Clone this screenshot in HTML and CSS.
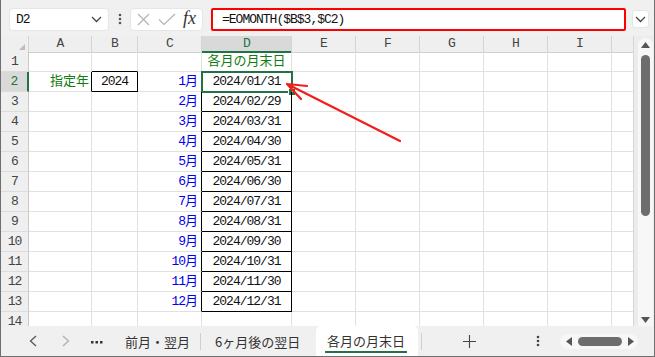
FILE: index.html
```html
<!DOCTYPE html>
<html lang="ja">
<head>
    <meta charset="UTF-8">
    <title>各月の月末日</title>
    <link rel="stylesheet" href="styles.css">
</head>
<body>
<div class="app">
    <div class="formula-bar">
        <div class="name-box">
            <span>D2</span>
            <svg width="11" height="7" viewBox="0 0 11 7"><polyline points="1,1 5.5,5.5 10,1" fill="none" stroke="#444" stroke-width="1.3"/></svg>
        </div>
        <div class="kebab">
            <svg width="4" height="12" viewBox="0 0 4 12"><circle cx="2" cy="2" r="1.3" fill="#555"/><circle cx="2" cy="6" r="1.3" fill="#555"/><circle cx="2" cy="10" r="1.3" fill="#555"/></svg>
        </div>
        <div class="fx-box">
            <svg class="ic-x" width="13" height="13" viewBox="0 0 13 13"><path d="M1 1 L12 12 M12 1 L1 12" stroke="#b4b4b4" stroke-width="1.2"/></svg>
            <svg class="ic-ok" width="18" height="13" viewBox="0 0 18 13"><polyline points="1,6.5 6,11.5 17,1" fill="none" stroke="#b4b4b4" stroke-width="1.2"/></svg>
            <span class="fx">fx</span>
        </div>
        <div class="formula">=EOMONTH($B$3,$C2)</div>
        <div class="expand">
            <svg width="11" height="7" viewBox="0 0 11 7"><polyline points="1,1 5.5,5.5 10,1" fill="none" stroke="#444" stroke-width="1.3"/></svg>
        </div>
    </div>

    <div class="sheet-area">
        <div class="grid">
            <div class="row hrow">
                <div class="corner"></div><div>A</div><div>B</div><div>C</div><div class="on">D</div><div>E</div><div>F</div><div>G</div><div>H</div><div>I</div><div></div>
            </div>
            <div class="row">
                <div class="rh">1</div><div></div><div class="bb"></div><div></div><div class="bb g ctr">各月の月末日</div><div></div><div></div><div></div><div></div><div></div><div></div>
            </div>
            <div class="row">
                <div class="rh on">2</div><div class="br g r">指定年</div><div class="box ctr">2024</div><div class="br m">1月</div>
                <div class="box ctr active">2024/01/31<span class="sel"><i class="handle"></i></span></div>
                <div></div><div></div><div></div><div></div><div></div><div></div>
            </div>
            <div class="row">
                <div class="rh">3</div><div></div><div></div><div class="br m">2月</div><div class="box ctr">2024/02/29</div><div></div><div></div><div></div><div></div><div></div><div></div>
            </div>
            <div class="row">
                <div class="rh">4</div><div></div><div></div><div class="br m">3月</div><div class="box ctr">2024/03/31</div><div></div><div></div><div></div><div></div><div></div><div></div>
            </div>
            <div class="row">
                <div class="rh">5</div><div></div><div></div><div class="br m">4月</div><div class="box ctr">2024/04/30</div><div></div><div></div><div></div><div></div><div></div><div></div>
            </div>
            <div class="row">
                <div class="rh">6</div><div></div><div></div><div class="br m">5月</div><div class="box ctr">2024/05/31</div><div></div><div></div><div></div><div></div><div></div><div></div>
            </div>
            <div class="row">
                <div class="rh">7</div><div></div><div></div><div class="br m">6月</div><div class="box ctr">2024/06/30</div><div></div><div></div><div></div><div></div><div></div><div></div>
            </div>
            <div class="row">
                <div class="rh">8</div><div></div><div></div><div class="br m">7月</div><div class="box ctr">2024/07/31</div><div></div><div></div><div></div><div></div><div></div><div></div>
            </div>
            <div class="row">
                <div class="rh">9</div><div></div><div></div><div class="br m">8月</div><div class="box ctr">2024/08/31</div><div></div><div></div><div></div><div></div><div></div><div></div>
            </div>
            <div class="row">
                <div class="rh">10</div><div></div><div></div><div class="br m">9月</div><div class="box ctr">2024/09/30</div><div></div><div></div><div></div><div></div><div></div><div></div>
            </div>
            <div class="row">
                <div class="rh">11</div><div></div><div></div><div class="br m">10月</div><div class="box ctr">2024/10/31</div><div></div><div></div><div></div><div></div><div></div><div></div>
            </div>
            <div class="row">
                <div class="rh">12</div><div></div><div></div><div class="br m">11月</div><div class="box ctr">2024/11/30</div><div></div><div></div><div></div><div></div><div></div><div></div>
            </div>
            <div class="row">
                <div class="rh">13</div><div></div><div></div><div class="br m">12月</div><div class="box ctr">2024/12/31</div><div></div><div></div><div></div><div></div><div></div><div></div>
            </div>
            <div class="row">
                <div class="rh">14</div><div></div><div></div><div></div><div></div><div></div><div></div><div></div><div></div><div></div><div></div>
            </div>
        </div>
        <div class="vscroll">
            <div class="vtrack">
                <svg width="9" height="6" viewBox="0 0 9 6"><polygon points="0,6 4.5,0 9,6" fill="#555"/></svg>
                <div class="vthumb"></div>
                <svg class="down" width="9" height="6" viewBox="0 0 9 6"><polygon points="0,0 4.5,6 9,0" fill="#555"/></svg>
            </div>
        </div>
    </div>

    <div class="tab-bar">
        <div class="nav">
            <svg width="8" height="12" viewBox="0 0 8 12"><polyline points="7,1 1.5,6 7,11" fill="none" stroke="#555" stroke-width="1.3"/></svg>
        </div>
        <div class="nav">
            <svg width="8" height="12" viewBox="0 0 8 12"><polyline points="1,1 6.5,6 1,11" fill="none" stroke="#b0b0b0" stroke-width="1.3"/></svg>
        </div>
        <div class="nav more">
            <svg width="12" height="3" viewBox="0 0 12 3"><rect x="0" y="0" width="2.5" height="2.5" fill="#333"/><rect x="4.5" y="0" width="2.5" height="2.5" fill="#333"/><rect x="9" y="0" width="2.5" height="2.5" fill="#333"/></svg>
        </div>
        <div class="tab t1">前月・翌月</div>
        <div class="tab t2">6ヶ月後の翌日</div>
        <div class="tab current"><span>各月の月末日</span></div>
        <div class="add">
            <svg width="13" height="13" viewBox="0 0 13 13"><path d="M6.5 0 V13 M0 6.5 H13" stroke="#444" stroke-width="1.1"/></svg>
        </div>
        <div class="tab-menu">
            <svg width="4" height="12" viewBox="0 0 4 12"><circle cx="2" cy="2" r="1.3" fill="#444"/><circle cx="2" cy="6" r="1.3" fill="#444"/><circle cx="2" cy="10" r="1.3" fill="#444"/></svg>
        </div>
        <div class="hscroll">
            <svg width="6" height="9" viewBox="0 0 6 9"><polygon points="6,0 0,4.5 6,9" fill="#555"/></svg>
            <div class="hthumb"></div>
            <svg width="6" height="9" viewBox="0 0 6 9"><polygon points="0,0 6,4.5 0,9" fill="#555"/></svg>
        </div>
    </div>

    <svg class="callout" width="655" height="357" viewBox="0 0 655 357">
        <path d="M400 141 L287 84 M287 84 L307 86 M287 84 L301 99" fill="none" stroke="#f21d1d" stroke-width="2.2" stroke-linecap="round"/>
    </svg>
</div>
</body>
</html>
```

FILE: styles.css
```css
:root {
    --grid-line: #e1e1e1;
    --head-bg: #efefef;
    --head-line: #d4d4d4;
    --excel-green: #217346;
    --text-green: #107c10;
    --month-blue: #0000f0;
}
* {
    box-sizing: border-box;
}
body {
    margin: 0;
    font-family: "Liberation Mono", "Noto Sans CJK JP", monospace;
    font-size: 13px;
    color: #111;
}
.app {
    position: relative;
    width: 655px;
    height: 357px;
    border: 1px solid #6f6f6f;
    border-top: 0;
    background: #f0f0f0;
    display: flex;
    flex-direction: column;
    overflow: hidden;
}

/* formula bar */
.formula-bar {
    height: 36px;
    flex: none;
    display: flex;
    align-items: center;
    padding: 2px 0 0 8px;
}
.name-box {
    width: 100px;
    height: 23px;
    background: #fff;
    border: 1px solid #e6e6e6;
    border-radius: 4px;
    display: flex;
    align-items: center;
    justify-content: space-between;
    padding: 0 6px 0 6px;
    letter-spacing: -1px;
}
.kebab {
    width: 21px;
    display: flex;
    justify-content: center;
}
.fx-box {
    width: 73px;
    height: 23px;
    background: #fff;
    border: 1px solid #e6e6e6;
    border-radius: 4px;
    display: flex;
    align-items: center;
    padding-left: 6px;
}
.ic-ok {
    margin-left: 8px;
}
.fx {
    margin-left: 7px;
    font-family: "Liberation Serif", serif;
    font-style: italic;
    font-size: 18px;
    color: #333;
    line-height: 1;
    margin-top: -2px;
}
.formula {
    margin-left: 8px;
    width: 415px;
    height: 23px;
    background: #fff;
    border: 2px solid #ff0000;
    border-radius: 2px;
    padding-left: 9px;
    line-height: 19px;
    letter-spacing: -1px;
}
.expand {
    margin-left: 6px;
    width: 17px;
    height: 18px;
    background: #fff;
    border: 1px solid #e6e6e6;
    border-radius: 3px;
    display: flex;
    align-items: center;
    justify-content: center;
}

/* sheet */
.sheet-area {
    height: 290px;
    flex: none;
    display: flex;
}
.grid {
    width: 632px;
    background: #fff;
    overflow: hidden;
}
.row {
    display: grid;
    grid-template-columns: 28px 63px 46px 64px 90px 64px 64px 64px 64px 64px 21px;
    height: 20px;
}
.row > div {
    position: relative;
    border-right: 1px solid var(--grid-line);
    border-bottom: 1px solid var(--grid-line);
    line-height: 19px;
    letter-spacing: -1px;
    white-space: nowrap;
}
.row > div:last-child {
    border-right: 0;
}
.hrow {
    height: 16px;
}
.hrow > div {
    background: var(--head-bg);
    border-right-color: var(--head-line);
    border-bottom-color: #cfcfcf;
    line-height: 15px;
    text-align: center;
    color: #444;
}
.hrow > div.on {
    background: #d9d9d9;
    color: var(--excel-green);
    border-bottom: 2px solid var(--excel-green);
}
.corner::after {
    content: '';
    position: absolute;
    right: 3px;
    bottom: 2px;
    border-left: 6px solid transparent;
    border-bottom: 6px solid #bdbdbd;
}
.row > .rh {
    background: var(--head-bg);
    border-right-color: #c8c8c8;
    border-bottom-color: #dcdcdc;
    text-align: center;
    color: #444;
}
.row > .rh.on {
    background: #d9d9d9;
    color: var(--excel-green);
    border-right: 2px solid var(--excel-green);
}
.row > .br {
    border-right-color: #000;
}
.row > .bb {
    border-bottom-color: #000;
}
.row > .box {
    border-right-color: #000;
    border-bottom-color: #000;
}
.ctr {
    text-align: center;
}
.r {
    text-align: right;
    padding-right: 2px;
}
.row > .g {
    color: var(--text-green);
    letter-spacing: 0;
}
.row > .m {
    text-align: right;
    padding-right: 4px;
    color: var(--month-blue);
}
.sel {
    position: absolute;
    left: -1px;
    top: -1px;
    right: -2px;
    bottom: -2px;
    border: 2px solid var(--excel-green);
}
.handle {
    position: absolute;
    right: -4px;
    bottom: -4px;
    width: 6px;
    height: 6px;
    background: var(--excel-green);
    border: 1px solid #fff;
    box-sizing: content-box;
    margin: -1px;
}

/* vertical scrollbar */
.vscroll {
    width: 21px;
    border-left: 1px solid #d6d6d6;
    background: #ececec;
    padding: 2px 1px 0 4px;
}
.vtrack {
    height: 100%;
    background: #f7f7f7;
    border-radius: 7px 7px 0 0;
    display: flex;
    flex-direction: column;
    align-items: center;
    padding-top: 4px;
}
.vthumb {
    width: 9px;
    height: 161px;
    margin-top: 7px;
    background: #6d6d6d;
    border-radius: 5px;
}
.vtrack .down {
    margin-top: auto;
    margin-bottom: 3px;
}

/* sheet tabs */
.tab-bar {
    flex: 1;
    display: flex;
    align-items: center;
    font-family: "Noto Sans CJK JP", sans-serif;
    font-size: 13px;
    color: #333;
}
.nav {
    width: 33px;
    display: flex;
    justify-content: center;
}
.nav:first-child {
    margin-left: 15px;
}
.nav.more {
    width: 30px;
    padding-top: 2px;
}
.tab {
    height: 100%;
    display: flex;
    align-items: center;
    white-space: nowrap;
}
.t1 {
    width: 89px;
    padding-left: 13px;
    border-right: 1px solid #cfcfcf;
    height: 17px;
}
.t2 {
    width: 115px;
    padding-left: 14px;
}
.current {
    width: 102px;
    background: #fff;
    border-radius: 5px 5px 0 0;
    padding-left: 9px;
}
.current span {
    padding: 0 2px;
    line-height: 20px;
    border-bottom: 2px solid var(--excel-green);
    margin-top: 2px;
}
.add {
    width: 95px;
    height: 17px;
    border-left: 1px solid #cfcfcf;
    margin-left: 3px;
    display: flex;
    align-items: center;
    justify-content: center;
}
.tab-menu {
    width: 44px;
    display: flex;
    justify-content: center;
}
.hscroll {
    width: 78px;
    height: 15px;
    background: #f7f7f7;
    border-radius: 8px;
    display: flex;
    align-items: center;
    justify-content: space-between;
    padding: 0 4px 0 6px;
}
.hthumb {
    width: 44px;
    height: 9px;
    background: #6d6d6d;
    border-radius: 5px;
}

.callout {
    position: absolute;
    left: -1px;
    top: 0;
    pointer-events: none;
}
```
